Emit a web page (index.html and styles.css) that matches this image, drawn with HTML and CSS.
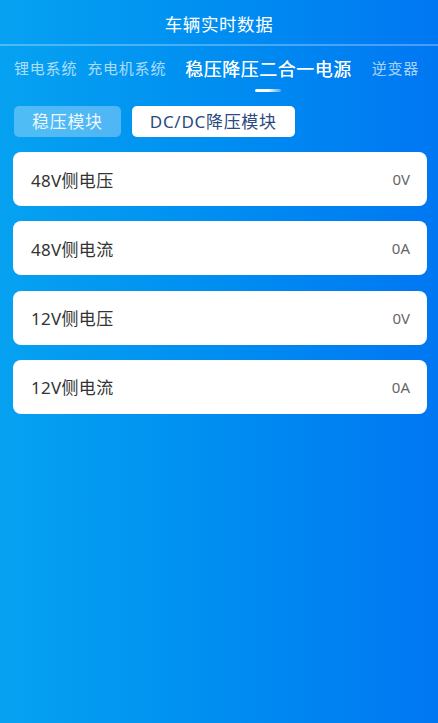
FILE: index.html
```html
<!DOCTYPE html>
<html lang="zh-CN">
<head>
<meta charset="utf-8">
<title>车辆实时数据</title>
<link rel="stylesheet" href="styles.css">
</head>
<body>
<div class="page">
  <header class="title-bar">车辆实时数据</header>
  <nav class="tabs">
    <span class="tab">锂电系统</span>
    <span class="tab">充电机系统</span>
    <span class="tab active">稳压降压二合一电源</span>
    <span class="tab">逆变器</span>
  </nav>
  <div class="segments">
    <span class="seg">稳压模块</span>
    <span class="seg on">DC/DC降压模块</span>
  </div>
  <div class="list">
    <div class="card"><span class="label">48V侧电压</span><span class="value">0V</span></div>
    <div class="card"><span class="label">48V侧电流</span><span class="value">0A</span></div>
    <div class="card"><span class="label">12V侧电压</span><span class="value">0V</span></div>
    <div class="card"><span class="label">12V侧电流</span><span class="value">0A</span></div>
  </div>
</div>
</body>
</html>
```
FILE: styles.css
```css
html, body {
  margin: 0;
  padding: 0;
  height: 100%;
}
body {
  font-family: "Noto Sans", "Noto Sans CJK SC", sans-serif;
  background: linear-gradient(90deg, #06a2f1 0%, #0090f1 45%, #0077f2 100%);
  color: #fff;
}
.page {
  min-height: 723px;
  display: flex;
  flex-direction: column;
}
.title-bar {
  height: 46px;
  display: flex;
  align-items: center;
  justify-content: center;
  font-size: 17.5px;
  letter-spacing: 0.6px;
  padding-top: 2px;
  box-sizing: border-box;
  border-bottom: 2px solid rgba(255, 255, 255, 0.28);
}
.tabs {
  display: flex;
  align-items: center;
  height: 43px;
  padding-left: 14px;
  white-space: nowrap;
  box-sizing: border-box;
}
.tab {
  font-size: 15px;
  letter-spacing: 0.8px;
  color: rgba(255, 255, 255, 0.68);
  margin-right: 10px;
  position: relative;
}
.tab:nth-child(2) { margin-right: 19px; }
.tab.active {
  font-size: 18px;
  letter-spacing: 0.5px;
  color: #fff;
  font-weight: 400;
  margin-right: 20px;
  text-shadow: 0 0 0.4px #fff;
}
.tab.active::after {
  content: "";
  position: absolute;
  left: 50%;
  transform: translateX(-50%);
  bottom: -11px;
  width: 26px;
  height: 3px;
  border-radius: 2px;
  background: linear-gradient(90deg, #ffffff 0%, #ffffff 50%, rgba(255,255,255,0.3) 100%);
}
.segments {
  display: flex;
  gap: 11px;
  padding: 17px 14px 0;
}
.seg {
  height: 31px;
  line-height: 31px;
  padding: 0 18px;
  border-radius: 5px;
  font-size: 17px;
  letter-spacing: 0.7px;
  background: rgba(255, 255, 255, 0.3);
  color: rgba(255, 255, 255, 0.92);
}
.seg.on {
  background: #fff;
  color: #2b4a7e;
}
.list {
  display: flex;
  flex-direction: column;
  gap: 15px;
  padding: 15px 11px 0 13px;
}
.card {
  height: 54px;
  background: #fff;
  border-radius: 8px;
  display: flex;
  align-items: center;
  justify-content: space-between;
  padding: 0 17px 0 18px;
  box-sizing: border-box;
}
.card:nth-child(3) { margin-top: 0.5px; }
.label {
  font-size: 17px;
  color: #333;
  letter-spacing: 0.3px;
}
.value {
  font-size: 15px;
  color: #666;
}
```
